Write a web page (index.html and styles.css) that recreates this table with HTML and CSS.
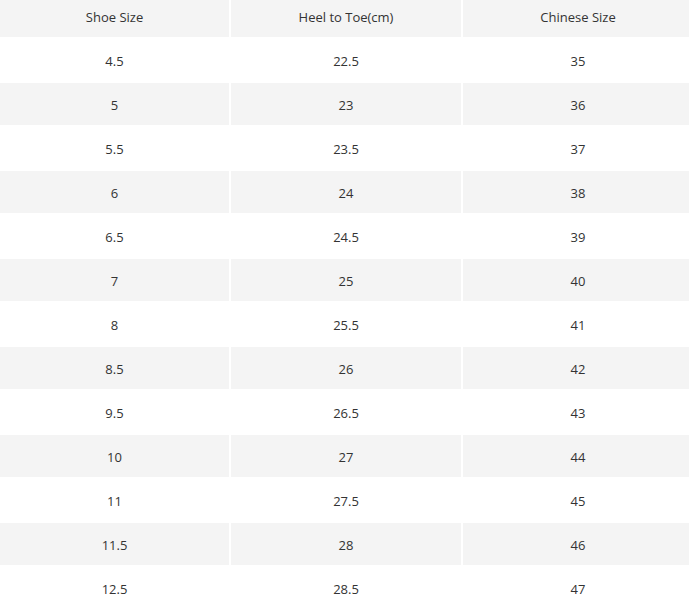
FILE: index.html
```html
<!DOCTYPE html>
<html>
<head>
<meta charset="utf-8">
<link rel="stylesheet" href="styles.css">
</head>
<body>
<div class="table">
  <div class="row head"><div class="cell">Shoe Size</div><div class="cell">Heel to Toe(cm)</div><div class="cell">Chinese Size</div></div>
  <div class="row"><div class="cell">4.5</div><div class="cell">22.5</div><div class="cell">35</div></div>
  <div class="row alt"><div class="cell">5</div><div class="cell">23</div><div class="cell">36</div></div>
  <div class="row"><div class="cell">5.5</div><div class="cell">23.5</div><div class="cell">37</div></div>
  <div class="row alt"><div class="cell">6</div><div class="cell">24</div><div class="cell">38</div></div>
  <div class="row"><div class="cell">6.5</div><div class="cell">24.5</div><div class="cell">39</div></div>
  <div class="row alt"><div class="cell">7</div><div class="cell">25</div><div class="cell">40</div></div>
  <div class="row"><div class="cell">8</div><div class="cell">25.5</div><div class="cell">41</div></div>
  <div class="row alt"><div class="cell">8.5</div><div class="cell">26</div><div class="cell">42</div></div>
  <div class="row"><div class="cell">9.5</div><div class="cell">26.5</div><div class="cell">43</div></div>
  <div class="row alt"><div class="cell">10</div><div class="cell">27</div><div class="cell">44</div></div>
  <div class="row"><div class="cell">11</div><div class="cell">27.5</div><div class="cell">45</div></div>
  <div class="row alt"><div class="cell">11.5</div><div class="cell">28</div><div class="cell">46</div></div>
  <div class="row"><div class="cell">12.5</div><div class="cell">28.5</div><div class="cell">47</div></div>
</div>
</body>
</html>
```
FILE: styles.css
```css
html, body {
  margin: 0;
  padding: 0;
  background: #ffffff;
  overflow: hidden;
}
body {
  font-family: "Open Sans", "Noto Sans", sans-serif;
  font-size: 13px;
  color: #333333;
}
.table {
  display: flex;
  flex-direction: column;
  gap: 2px;
  width: 693px;
}
.row {
  display: grid;
  grid-template-columns: 229px 230px 230px;
  column-gap: 2px;
  height: 42px;
}
.row.head {
  height: 37px;
}
.cell {
  display: flex;
  align-items: center;
  justify-content: center;
  box-sizing: border-box;
  padding-top: 2px;
}
.row.head .cell {
  padding-top: 0;
  padding-bottom: 3px;
}
.row.head .cell,
.row.alt .cell {
  background: #f4f4f4;
}
```
